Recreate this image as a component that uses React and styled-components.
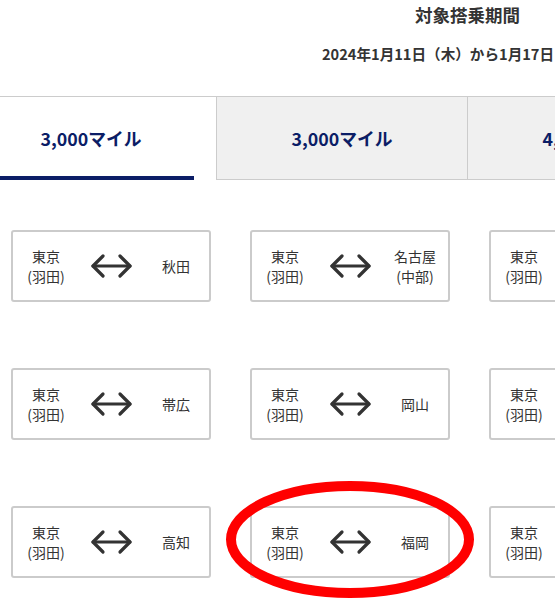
import React from 'react';
import styled, { createGlobalStyle } from 'styled-components';

const GlobalStyle = createGlobalStyle`
  html, body {
    margin: 0;
    padding: 0;
    background: #fff;
    overflow: hidden;
  }
  body {
    font-family: "Noto Sans CJK JP", "Noto Sans", sans-serif;
    color: #333;
  }
`;

const tabs = [
  { label: '3,000マイル', active: true },
  { label: '3,000マイル' },
  { label: '4,000マイル' }
];

const routes = [
  ['秋田', '名古屋\n(中部)', '大阪\n(伊丹)'],
  ['帯広', '岡山', '広島'],
  ['高知', '福岡', '那覇']
];

function Arrow() {
  return (
    <svg width="43" height="26" viewBox="0 0 43 26" fill="none" stroke="#333" strokeWidth="3.2" strokeLinecap="round" strokeLinejoin="round">
      <line x1="3" y1="13" x2="40" y2="13" />
      <polyline points="13,3 3,13 13,23" />
      <polyline points="30,3 40,13 30,23" />
    </svg>
  );
}

function Circle() {
  return (
    <Highlight width="250" height="119" viewBox="0 0 250 119">
      <ellipse cx="125" cy="59.5" rx="119" ry="53.5" fill="none" stroke="#ff0000" strokeWidth="10" />
    </Highlight>
  );
}

function App() {
  return (
    <Page>
      <GlobalStyle />
      <Header>
        <Title>対象搭乗期間</Title>
        <Period>2024年1月11日（木）から1月17日（木）まで</Period>
      </Header>
      <TabList>
        {tabs.map((t, i) => (
          <Tab key={i} $active={t.active}>{t.label}</Tab>
        ))}
      </TabList>
      <CardGrid>
        {routes.map((row, r) =>
          row.map((dest, c) => (
            <Card key={`${r}-${c}`}>
              <Place>東京{'\n'}(羽田)</Place>
              <ArrowCell><Arrow /></ArrowCell>
              <Place>{dest}</Place>
              {r === 2 && c === 1 && <Circle />}
            </Card>
          ))
        )}
      </CardGrid>
    </Page>
  );
}

const Page = styled.div`
  width: 760px;
  height: 605px;
  position: relative;
`;

const Header = styled.header`
  display: flex;
  flex-direction: column;
  height: 96px;
`;

const Title = styled.h2`
  margin: 2px 0 0 415px;
  font-size: 17.5px;
  line-height: 26px;
  font-weight: 700;
  color: #333;
`;

const Period = styled.p`
  margin: 16px 0 0 322px;
  font-size: 14.6px;
  line-height: 20px;
  font-weight: 700;
  color: #333;
  white-space: nowrap;
`;

const TabList = styled.div`
  display: flex;
  border-top: 1px solid #ccc;
  margin-left: -12px;
  height: 83px;
`;

const Tab = styled.div`
  box-sizing: border-box;
  display: flex;
  align-items: center;
  justify-content: center;
  flex: none;
  width: ${p => (p.$active ? '206px' : '251px')};
  margin-right: ${p => (p.$active ? '22px' : '0')};
  background: ${p => (p.$active ? '#fff' : '#f0f0f0')};
  border-left: ${p => (p.$active ? 'none' : '1px solid #ccc')};
  border-bottom: ${p => (p.$active ? '4px solid #0b1d66' : '1px solid #ccc')};
  padding-top: ${p => (p.$active ? '3px' : '0')};
  font-size: 17.8px;
  font-weight: 700;
  color: #0b1d66;
`;

const CardGrid = styled.div`
  display: grid;
  grid-template-columns: repeat(3, 200px);
  grid-auto-rows: 72px;
  column-gap: 39px;
  row-gap: 66px;
  padding: 50px 0 0 11px;
`;

const Card = styled.div`
  position: relative;
  box-sizing: border-box;
  display: grid;
  grid-template-columns: 66px 64px 66px;
  align-items: center;
  border: 2px solid #cbcbcb;
  border-radius: 3px;
  background: #fff;
`;

const Place = styled.div`
  white-space: pre-line;
  text-align: center;
  font-size: 14px;
  line-height: 20px;
  color: #333;
`;

const ArrowCell = styled.div`
  display: flex;
  justify-content: center;
  align-items: center;
`;

const Highlight = styled.svg`
  position: absolute;
  left: -27px;
  top: -28px;
  pointer-events: none;
`;

export default App;
